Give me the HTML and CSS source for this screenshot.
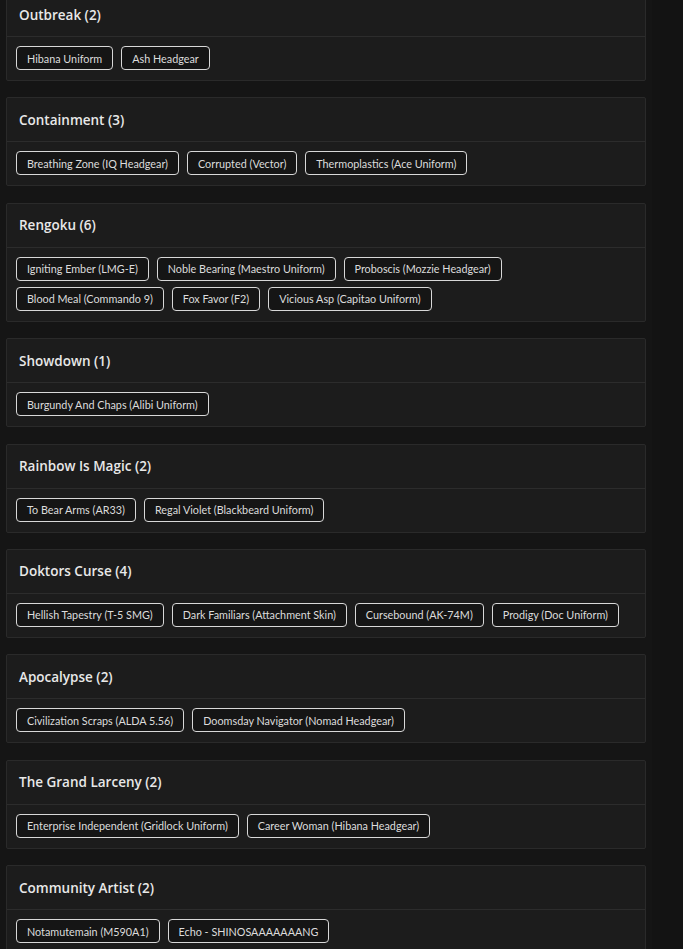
FILE: index.html
```html
<!DOCTYPE html>
<html lang="en">
<head>
  <meta charset="UTF-8">
  <meta name="viewport" content="width=device-width, initial-scale=1.0">
  <link rel="stylesheet" href="styles.css">
  <title>events</title>
</head>
<body>
  <div class="main">
    <div class="event">
      <div class="event-head"><h3>Outbreak (2)</h3></div>
      <div class="event-body">
        <span class="tag">Hibana Uniform</span>
        <span class="tag">Ash Headgear</span>
      </div>
    </div>

    <div class="event">
      <div class="event-head"><h3>Containment (3)</h3></div>
      <div class="event-body">
        <span class="tag">Breathing Zone (IQ Headgear)</span>
        <span class="tag">Corrupted (Vector)</span>
        <span class="tag">Thermoplastics (Ace Uniform)</span>
      </div>
    </div>

    <div class="event">
      <div class="event-head"><h3>Rengoku (6)</h3></div>
      <div class="event-body">
        <span class="tag">Igniting Ember (LMG-E)</span>
        <span class="tag">Noble Bearing (Maestro Uniform)</span>
        <span class="tag">Proboscis (Mozzie Headgear)</span>
        <span class="tag">Blood Meal (Commando 9)</span>
        <span class="tag">Fox Favor (F2)</span>
        <span class="tag">Vicious Asp (Capitao Uniform)</span>
      </div>
    </div>

    <div class="event">
      <div class="event-head"><h3>Showdown (1)</h3></div>
      <div class="event-body">
        <span class="tag">Burgundy And Chaps (Alibi Uniform)</span>
      </div>
    </div>

    <div class="event">
      <div class="event-head"><h3>Rainbow Is Magic (2)</h3></div>
      <div class="event-body">
        <span class="tag">To Bear Arms (AR33)</span>
        <span class="tag">Regal Violet (Blackbeard Uniform)</span>
      </div>
    </div>

    <div class="event">
      <div class="event-head"><h3>Doktors Curse (4)</h3></div>
      <div class="event-body">
        <span class="tag">Hellish Tapestry (T-5 SMG)</span>
        <span class="tag">Dark Familiars (Attachment Skin)</span>
        <span class="tag">Cursebound (AK-74M)</span>
        <span class="tag">Prodigy (Doc Uniform)</span>
      </div>
    </div>

    <div class="event">
      <div class="event-head"><h3>Apocalypse (2)</h3></div>
      <div class="event-body">
        <span class="tag">Civilization Scraps (ALDA 5.56)</span>
        <span class="tag">Doomsday Navigator (Nomad Headgear)</span>
      </div>
    </div>

    <div class="event">
      <div class="event-head"><h3>The Grand Larceny (2)</h3></div>
      <div class="event-body">
        <span class="tag">Enterprise Independent (Gridlock Uniform)</span>
        <span class="tag">Career Woman (Hibana Headgear)</span>
      </div>
    </div>

    <div class="event">
      <div class="event-head"><h3>Community Artist (2)</h3></div>
      <div class="event-body">
        <span class="tag">Notamutemain (M590A1)</span>
        <span class="tag">Echo - SHINOSAAAAAAANG</span>
      </div>
    </div>
  </div>
</body>
</html>
```

FILE: styles.css
```css
*{
  margin: 0;
  padding: 0;
  box-sizing: border-box;
}
body{
  background: #131313;
  font-family: "Open Sans", "Noto Sans", sans-serif;
  color: #e6e6e6;
  overflow: hidden;
}
.main{
  width: 652px;
  padding: 0 6px;
  margin-top: -8px;
  background: #151515;
}
.event{
  background: #1c1c1c;
  border: 1px solid #2a2a2a;
  border-radius: 2px;
  margin-bottom: 16.4px;
}
.event-head{
  height: 44px;
  display: flex;
  align-items: center;
  padding: 0 12px;
  border-bottom: 1px solid #2c2c2c;
}
.event-head h3{
  font-size: 13.5px;
  font-weight: 600;
  color: #e8e8e8;
}
.event-body{
  display: flex;
  flex-wrap: wrap;
  gap: 6px 8px;
  padding: 9px 9px 10px;
}
.tag{
  display: inline-flex;
  align-items: center;
  height: 24px;
  padding: 0 10px;
  border: 1px solid #d8d8d8;
  border-radius: 4px;
  background: #151515;
  font-family: Lato, "Open Sans", sans-serif;
  font-size: 10.8px;
  color: #dcdcdc;
}
```
